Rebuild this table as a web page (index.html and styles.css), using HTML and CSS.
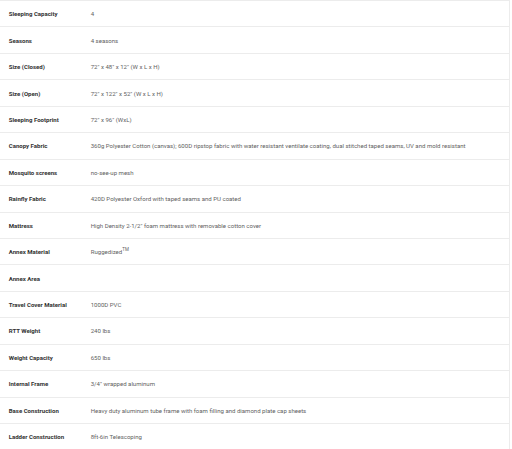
FILE: index.html
```html
<!DOCTYPE html>
<html>
<head>
<meta charset="utf-8">
<link rel="stylesheet" href="styles.css">
</head>
<body>
<div class="specs">
  <div class="row"><div class="label">Sleeping Capacity</div><div class="value">4</div></div>
  <div class="row"><div class="label">Seasons</div><div class="value">4 seasons</div></div>
  <div class="row"><div class="label">Size (Closed)</div><div class="value">72" x 48" x 12" (W x L x H)</div></div>
  <div class="row"><div class="label">Size (Open)</div><div class="value">72" x 122" x 52" (W x L x H)</div></div>
  <div class="row"><div class="label">Sleeping Footprint</div><div class="value">72" x 96" (WxL)</div></div>
  <div class="row"><div class="label">Canopy Fabric</div><div class="value">360g Polyester Cotton (canvas); 600D ripstop fabric with water resistant ventilate coating, dual stitched taped seams, UV and mold resistant</div></div>
  <div class="row"><div class="label">Mosquito screens</div><div class="value">no-see-up mesh</div></div>
  <div class="row"><div class="label">Rainfly Fabric</div><div class="value">420D Polyester Oxford with taped seams and PU coated</div></div>
  <div class="row"><div class="label">Mattress</div><div class="value">High Density 2-1/2" foam mattress with removable cotton cover</div></div>
  <div class="row"><div class="label">Annex Material</div><div class="value">Ruggedized<sup>TM</sup></div></div>
  <div class="row"><div class="label">Annex Area</div><div class="value"></div></div>
  <div class="row"><div class="label">Travel Cover Material</div><div class="value">1000D PVC</div></div>
  <div class="row"><div class="label">RTT Weight</div><div class="value">240 lbs</div></div>
  <div class="row"><div class="label">Weight Capacity</div><div class="value">650 lbs</div></div>
  <div class="row"><div class="label">Internal Frame</div><div class="value">3/4" wrapped aluminum</div></div>
  <div class="row"><div class="label">Base Construction</div><div class="value">Heavy duty aluminum tube frame with foam filling and diamond plate cap sheets</div></div>
  <div class="row"><div class="label">Ladder Construction</div><div class="value">8ft-6in Telescoping</div></div>
</div>
</body>
</html>
```
FILE: styles.css
```css
html, body {
  margin: 0;
  padding: 0;
  background: #fff;
}
.specs {
  width: 510px;
  border-right: 1px solid #ececec;
  box-sizing: border-box;
  font-family: Roboto, "Liberation Sans", sans-serif;
  font-size: 6.05px;
}
.row {
  display: grid;
  grid-template-columns: 82px 1fr;
  align-items: center;
  height: 26.44px;
  box-sizing: border-box;
  border-top: 1px solid #ececec;
}
.label {
  padding-left: 8.7px;
  font-weight: 700;
  color: #333;
}
.value {
  padding-left: 8.7px;
  color: #5f5f5f;
}
.value sup {
  font-size: 4.5px;
  line-height: 0;
}
```
